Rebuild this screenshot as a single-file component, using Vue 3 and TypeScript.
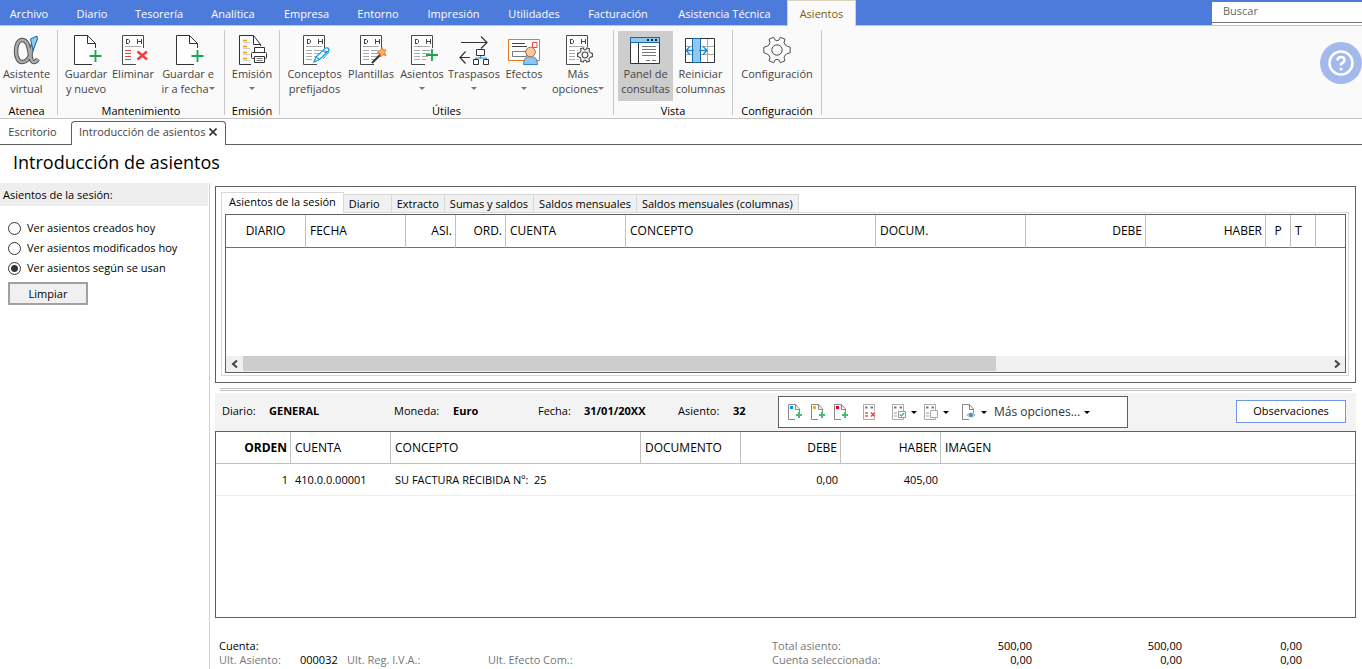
<script setup lang="ts">
import { ref } from 'vue'

interface RibbonItem { icon: string; lines: string[]; arrow?: boolean; active?: boolean }
interface RibbonGroup { name: string; cls: string; items: RibbonItem[] }
interface Column { label: string; cls: string }

const menu: string[] = ['Archivo', 'Diario', 'Tesorería', 'Analítica', 'Empresa', 'Entorno', 'Impresión', 'Utilidades', 'Facturación', 'Asistencia Técnica', 'Asientos']
const activeMenu = ref('Asientos')

const groups: RibbonGroup[] = [
  { name: 'Atenea', cls: 'g-atenea', items: [{ icon: 'alpha', lines: ['Asistente', 'virtual'] }] },
  { name: 'Mantenimiento', cls: 'g-mant', items: [
    { icon: 'page-plus', lines: ['Guardar', 'y nuevo'] },
    { icon: 'ledger-delete', lines: ['Eliminar'] },
    { icon: 'page-plus', lines: ['Guardar e', 'ir a fecha'], arrow: true },
  ] },
  { name: 'Emisión', cls: 'g-emision', items: [{ icon: 'print', lines: ['Emisión', ''], arrow: true }] },
  { name: 'Útiles', cls: 'g-utiles', items: [
    { icon: 'ledger-pen', lines: ['Conceptos', 'prefijados'] },
    { icon: 'ledger-wand', lines: ['Plantillas'] },
    { icon: 'ledger-plus', lines: ['Asientos', ''], arrow: true },
    { icon: 'transfer', lines: ['Traspasos', ''], arrow: true },
    { icon: 'effects', lines: ['Efectos', ''], arrow: true },
    { icon: 'ledger-gear', lines: ['Más', 'opciones'], arrow: true },
  ] },
  { name: 'Vista', cls: 'g-vista', items: [
    { icon: 'panel', lines: ['Panel de', 'consultas'], active: true },
    { icon: 'columns', lines: ['Reiniciar', 'columnas'] },
  ] },
  { name: 'Configuración', cls: 'g-config', items: [{ icon: 'gear', lines: ['Configuración'] }] },
]

const filters = [
  { value: 'creados', label: 'Ver asientos creados hoy' },
  { value: 'modificados', label: 'Ver asientos modificados hoy' },
  { value: 'usan', label: 'Ver asientos según se usan' },
]
const filter = ref('usan')

const queryTabs: string[] = ['Asientos de la sesión', 'Diario', 'Extracto', 'Sumas y saldos', 'Saldos mensuales', 'Saldos mensuales (columnas)']
const queryTab = ref(queryTabs[0])

const queryColumns: Column[] = [
  { label: 'DIARIO', cls: 'w80 center' },
  { label: 'FECHA', cls: 'w100' },
  { label: 'ASI.', cls: 'w50 right' },
  { label: 'ORD.', cls: 'w50 right' },
  { label: 'CUENTA', cls: 'w120' },
  { label: 'CONCEPTO', cls: 'w250' },
  { label: 'DOCUM.', cls: 'w150' },
  { label: 'DEBE', cls: 'w120 right' },
  { label: 'HABER', cls: 'w120 right' },
  { label: 'P', cls: 'w25 center' },
  { label: 'T', cls: 'w25' },
  { label: '', cls: '' },
]
const entryColumns: Column[] = [
  { label: 'ORDEN', cls: 'w75 right strong' },
  { label: 'CUENTA', cls: 'w100' },
  { label: 'CONCEPTO', cls: 'w250' },
  { label: 'DOCUMENTO', cls: 'w100' },
  { label: 'DEBE', cls: 'w100 right' },
  { label: 'HABER', cls: 'w100 right' },
  { label: 'IMAGEN', cls: '' },
]
const rows: string[][] = [['1', '410.0.0.00001', 'SU FACTURA RECIBIDA Nº:\u00a0 25', '', '0,00', '405,00', '']]

const tools = [
  { icon: 'mini-blue', name: 'Nuevo apunte', arrow: false, gap: false },
  { icon: 'mini-amber', name: 'Insertar apunte', arrow: false, gap: false },
  { icon: 'mini-red', name: 'Añadir contrapartida', arrow: false, gap: true },
  { icon: 'mini-delete', name: 'Eliminar apunte', arrow: false, gap: true },
  { icon: 'mini-check', name: 'Validar', arrow: true, gap: false },
  { icon: 'mini-copy', name: 'Copiar', arrow: true, gap: false },
  { icon: 'mini-view', name: 'Ver documento', arrow: true, gap: false },
]
</script>

<template>
  <div class="app">
    <svg class="defs" aria-hidden="true">
      <symbol id="gear-shape" viewBox="-1 -1 34 34">
        <path d="M12.500 2.500 14 5.500Q16 6.500 18 5.500L19.500 2.500 24.500 4.500 23.500 8Q24 11 27 12L30 13V19L26.500 20Q24 21 23.500 24L24.500 27.500 19.500 29.500 18 26.500Q16 25.500 14 26.500L12.500 29.500 7.500 27.500 8.500 24Q8 21 5 20L2 19V13L5.500 12Q8 11 8.500 8L7.500 4.500Z" fill="none" stroke="#444" />
        <circle cx="16" cy="16" r="5.500" fill="none" stroke="#444" />
      </symbol>
      <symbol id="ledger" viewBox="0 0 32 32">
        <path d="M26.500 14V1.500H5.500V30.500H19" fill="#fff" stroke="#4a4a4a" />
        <path d="M9.500 5V10M9.500 5.500H11.500L12.500 6.500V8.500L11.500 9.500H9.500M20.500 5V10M24.500 5V10M20.500 7.500H24.500" fill="none" stroke="#444" />
        <path d="M8 12.500H24" stroke="#aaa" />
      </symbol>
      <symbol id="ledger-rows" viewBox="0 0 32 32">
        <path d="M8 16.500H14M16 16.500H24M8 19.500H14M16 19.500H24M8 22.500H14M16 22.500H22M8 25.500H14M16 25.500H20" stroke="#aaa" />
      </symbol>
      <symbol id="alpha" viewBox="1 0 32 32">
        <path d="M23 10C21 17 19 22 22 27C23.500 29 26 28 28 25M12 6C4 6 4 28 12 28C19 28 20.500 20 22 14M12 6C20 6 18.500 20 22 27" fill="none" stroke="#555" stroke-width="4.500" />
        <path d="M23 10C21 17 19 22 22 27C23.500 29 26 28 28 25M12 6C4 6 4 28 12 28C19 28 20.500 20 22 14M12 6C20 6 18.500 20 22 27" fill="none" stroke="#aaa" stroke-width="2.500" />
        <path d="M20.500 5 27 2 27.500 5 23 16.500Z" fill="#8ecaf0" stroke="#1668a8" />
      </symbol>
      <symbol id="page-plus" viewBox="0 0 32 32">
        <path d="M25.500 14V9.500L17.500 1.500H4.500V30.500H22" fill="#fff" stroke="#333" />
        <path d="M17.500 1.500V9.500H25.500" fill="none" stroke="#333" />
        <path d="M25.500 16V28M19.500 22H31.500" stroke="#17a650" stroke-width="1.800" />
      </symbol>
      <symbol id="ledger-delete" viewBox="0 0 32 32">
        <use href="#ledger" />
        <path d="M8 16.500H14M8 19.500H14M8 22.500H14M8 25.500H14" stroke="#ef4040" />
        <path d="M20.500 17.500 30 25.500M30 17.500 20.500 25.500" stroke="#ef4040" stroke-width="2.500" />
      </symbol>
      <symbol id="print" viewBox="0 0 32 32">
        <path d="M24.500 10.500 17.500 1.500H3.500V30.500H15M17.500 1.500V10.500H24.500V12" fill="none" stroke="#333" />
        <path d="M7 6.500H11M7 12.500H11M7 18.500H11M7 24.500H11" stroke="#f09a18" stroke-width="1.500" />
        <path d="M7 8.500H14M7 14.500H14M7 20.500H14M7 26.500H14" stroke="#ccc" />
        <path d="M18.500 18V13.500H28.500V18" fill="#fff" stroke="#333" />
        <rect x="15.500" y="18.500" width="15" height="6" rx="1" fill="#fff" stroke="#333" />
        <path d="M18.500 22.500H28.500V28.500H18.500Z" fill="#fff" stroke="#333" />
        <path d="M20.500 24.500H26.500M20.500 26.500H26.500" stroke="#777" />
      </symbol>
      <symbol id="ledger-pen" viewBox="1 0 32 32">
        <use href="#ledger" width="32" height="32" /><use href="#ledger-rows" width="32" height="32" />
        <path d="M16 28 18 23 27.500 14Q31 13 31 16.500L21.500 25.500ZM18 23 21.500 25.500M25 16.500 28 19" fill="#fff" stroke="#1b9de2" stroke-width="1.300" />
        <path d="M27 17 31 18 25 25" fill="none" stroke="#1b9de2" />
      </symbol>
      <symbol id="ledger-wand" viewBox="0 0 32 32">
        <use href="#ledger" /><use href="#ledger-rows" />
        <path d="M17 29 26 20" stroke="#333" stroke-width="2" />
        <path d="M27 13.500 28.500 16 31 16 29.500 18.500 31 21.500 28 20.500 25.500 23 25 19.500 22 18.500 25 17Z" fill="#ffb070" stroke="#e8791c" />
      </symbol>
      <symbol id="ledger-plus" viewBox="0 0 32 32">
        <use href="#ledger" /><use href="#ledger-rows" />
        <path d="M26 15V27M20 21H32" stroke="#17a650" stroke-width="1.800" />
      </symbol>
      <symbol id="transfer" viewBox="0 0 32 32">
        <path d="M3 8.500H29M23 2.500 29 8.500 23 14.500M12 23.500H2M7.500 17.500 2 23.500 7.500 29.500" fill="none" stroke="#333" stroke-width="1.200" />
        <path d="M22.500 21V24M17.500 26V24H28.500V26" fill="none" stroke="#1b87d2" />
        <path d="M18.500 15.500H26.500V21.500H18.500ZM15.500 25.500H20.500V30.500H15.500ZM25.500 25.500H30.500V30.500H25.500Z" fill="#fff" stroke="#333" />
      </symbol>
      <symbol id="effects" viewBox="0 0 32 32">
        <path d="M.5 5.500H31.500V26.500H.5Z" fill="#fff" stroke="#e8791c" />
        <path d="M4 9.500H17M4 12.500H19" stroke="#444" />
        <path d="M4.500 17.500H18.500V22.500H4.500Z" fill="#fff" stroke="#777" />
        <path d="M24.500 8.500H29V13.500H24.500Z" fill="#fff" stroke="#ef4040" />
        <path d="M15.500 30.500Q15.500 22.500 22.500 22.500T29.500 30.500Z" fill="#8ec6f0" stroke="#3488c8" />
        <circle cx="22.500" cy="18" r="4.800" fill="#fbc9a0" stroke="#a86c40" />
      </symbol>
      <symbol id="ledger-gear" viewBox="1 0 32 32">
        <use href="#ledger" width="32" height="32" /><use href="#ledger-rows" width="32" height="32" />
        <circle cx="24" cy="20.500" r="8" fill="#fafafa" />
        <svg x="15" y="12" width="18" height="18" viewBox="0 0 32 32"><use href="#gear-shape" stroke-width="2" /></svg>
      </symbol>
      <symbol id="panel" viewBox="1 0 32 32">
        <path d="M1.500 3.500H30.500V29.500H1.500Z" fill="#fff" stroke="#333" />
        <path d="M1.500 3.500H30.500V8.500H1.500Z" fill="#8ecaf0" stroke="#1668a8" />
        <path d="M18 6H20M22 6H24M26 6H28" stroke="#222" stroke-width="2" />
        <path d="M9.500 9V29" stroke="#333" />
        <path d="M13 12.500H27M13 15.500H27M13 18.500H27M13 21.500H27M17 26.500H21M23 26.500H27" stroke="#777" />
      </symbol>
      <symbol id="columns" viewBox="1 0 32 32">
        <path d="M1.500 4.500H30.500V28.500H1.500Z" fill="#fff" stroke="#333" />
        <path d="M2 12.500H30M2 20.500H30M23.500 5V28" stroke="#aaa" />
        <path d="M8.500 4.500H16.500V28.500H8.500Z" fill="#8ecaf0" stroke="#1668a8" />
        <path d="M10 16.500H2M6 12.500 2 16.500 6 20.500M15 16.500H23M19 12.500 23 16.500 19 20.500" fill="none" stroke="#1b87d2" stroke-width="1.300" />
      </symbol>
      <symbol id="gear" viewBox="0 0 32 32">
        <use href="#gear-shape" />
      </symbol>

      <symbol id="mini-page" viewBox="0 0 16 18">
        <path d="M12.500 10V6L8.500 1.500H1.500V16.500H8M8.500 1.500V6.500H12.500" fill="#fff" stroke="#888" />
      </symbol>
      <symbol id="mini-plus" viewBox="0 0 16 18">
        <path d="M12 9V15M9 12H15" stroke="#4cb878" stroke-width="2" />
      </symbol>
      <symbol id="mini-ledger" viewBox="0 0 16 18">
        <path d="M12.500 8V1.500H1.500V16.500H12.500V14" fill="#fff" stroke="#aaa" />
        <path d="M3 4.500H5.500M8.500 4.500H11" stroke="#777" stroke-width="2" />
      </symbol>
      <symbol id="mini-blue" viewBox="0 0 16 18"><use href="#mini-page" /><path d="M3 3H6V6H3Z" fill="#0a94dc" /><use href="#mini-plus" /></symbol>
      <symbol id="mini-amber" viewBox="0 0 16 18"><use href="#mini-page" /><path d="M3 3H6V6H3Z" fill="#f5a623" /><use href="#mini-plus" /></symbol>
      <symbol id="mini-red" viewBox="0 0 16 18"><use href="#mini-page" /><path d="M3 3H6V6H3Z" fill="#e00020" /><use href="#mini-plus" /></symbol>
      <symbol id="mini-delete" viewBox="0 0 16 18">
        <use href="#mini-ledger" />
        <path d="M3 10H6M3 13H6" stroke="#f08080" stroke-width="2" />
        <path d="M9 9.500 13 13.500M13 9.500 9 13.500" stroke="#ee4040" stroke-width="1.600" />
      </symbol>
      <symbol id="mini-check" viewBox="0 0 16 18">
        <use href="#mini-ledger" />
        <path d="M3 10H6M3 13H6" stroke="#ccc" stroke-width="2" />
        <path d="M7.500 8.500H14.500V14.500H7.500Z" fill="#fff" stroke="#999" /><path d="M9 11.500 10.500 13 13 10" fill="none" stroke="#4cb878" stroke-width="1.400" />
      </symbol>
      <symbol id="mini-copy" viewBox="0 0 16 18">
        <use href="#mini-ledger" />
        <path d="M3 10H6M3 13H6" stroke="#ccc" stroke-width="2" />
        <path d="M7.500 7.500H14.500V14.500H7.500Z" fill="#fff" stroke="#aaa" />
      </symbol>
      <symbol id="mini-view" viewBox="0 0 16 18">
        <use href="#mini-page" />
        <path d="M6 12Q10 8 14 12Q10 16 6 12Z" fill="#c8ddf0" stroke="#9ab8d0" /><circle cx="10" cy="12" r="2" fill="#4a8cc4" />
      </symbol>
    </svg>

    <header class="menubar">
      <nav class="menu" aria-label="Menú principal">
        <button v-for="m in menu" :key="m" type="button" :class="{ current: m === activeMenu }" @click="activeMenu = m">{{ m }}</button>
      </nav>
      <input class="search" type="search" placeholder="Buscar" aria-label="Buscar">
    </header>

    <div class="ribbon">
      <section v-for="g in groups" :key="g.name" class="group" :class="g.cls">
        <div class="items">
          <button v-for="(it, i) in g.items" :key="i" type="button" class="item" :class="{ on: it.active }">
            <svg class="icon" aria-hidden="true"><use :href="'#' + it.icon" /></svg>
            <span v-for="(l, n) in it.lines" :key="n" class="line">{{ l }}<i v-if="it.arrow && n === it.lines.length - 1" class="caret"></i></span>
          </button>
        </div>
        <h2>{{ g.name }}</h2>
      </section>
      <button type="button" class="help" aria-label="Ayuda">
        <svg viewBox="0 0 42 42" aria-hidden="true">
          <circle cx="21" cy="21" r="11.500" fill="none" stroke="#fff" stroke-width="2.500" />
          <path d="M17.500 18.500Q17.500 15 21 15T24.500 18Q24.500 20 21 22V23.500" fill="none" stroke="#fff" stroke-width="2.500" />
          <circle cx="21" cy="27" r="1.500" fill="#fff" />
        </svg>
      </button>
    </div>

    <nav class="doctabs" aria-label="Documentos">
      <button type="button" class="doctab">Escritorio</button>
      <div class="doctab open">
        <button type="button">Introducción de asientos</button>
        <button type="button" class="close" aria-label="Cerrar"><svg viewBox="0 0 8 8" aria-hidden="true"><path d="M.5.5 7.500 7.500M7.500.5.5 7.500" stroke="#333" stroke-width="1.600" /></svg></button>
      </div>
      <span class="rest"></span>
    </nav>

    <h1>Introducción de asientos</h1>

    <div class="body">
      <aside class="side">
        <h2>Asientos de la sesión:</h2>
        <div class="filters">
          <label v-for="f in filters" :key="f.value"><input v-model="filter" type="radio" name="filtro" :value="f.value">{{ f.label }}</label>
          <button type="button" class="clear">Limpiar</button>
        </div>
      </aside>

      <main class="main">
        <section class="query">
          <div class="tabs" role="tablist">
            <button v-for="t in queryTabs" :key="t" type="button" role="tab" :aria-selected="t === queryTab" :class="{ sel: t === queryTab }" @click="queryTab = t">{{ t }}</button>
          </div>
          <div class="tabbody">
            <div class="grid upper">
              <table>
                <thead><tr><th v-for="(c, i) in queryColumns" :key="i" :class="c.cls">{{ c.label }}</th></tr></thead>
              </table>
              <div class="scroll">
                <button type="button" aria-label="Desplazar a la izquierda"><svg viewBox="0 0 8 8"><path d="M6 .5 2 4 6 7.500" fill="none" stroke="#444" stroke-width="2" /></svg></button>
                <div class="track"><div class="thumb"></div></div>
                <button type="button" aria-label="Desplazar a la derecha"><svg viewBox="0 0 8 8"><path d="M2 .5 6 4 2 7.500" fill="none" stroke="#444" stroke-width="2" /></svg></button>
              </div>
            </div>
          </div>
        </section>

        <div class="splitter"></div>

        <section class="entry">
          <div class="entryhead">
            <dl>
              <dt>Diario:</dt><dd>GENERAL</dd>
              <dt>Moneda:</dt><dd>Euro</dd>
              <dt>Fecha:</dt><dd>31/01/20XX</dd>
              <dt>Asiento:</dt><dd>32</dd>
            </dl>
            <div class="toolbar">
              <button v-for="t in tools" :key="t.icon" type="button" :aria-label="t.name" :class="{ drop: t.arrow, gap: t.gap }">
                <svg class="mini" aria-hidden="true"><use :href="'#' + t.icon" /></svg><i v-if="t.arrow" class="caret dark"></i>
              </button>
              <button type="button" class="more">Más opciones...<i class="caret dark"></i></button>
            </div>
            <button type="button" class="notes">Observaciones</button>
          </div>
          <div class="grid lower">
            <table>
              <thead><tr><th v-for="c in entryColumns" :key="c.label" :class="c.cls">{{ c.label }}</th></tr></thead>
              <tbody>
                <tr v-for="(r, i) in rows" :key="i"><td v-for="(v, n) in r" :key="n" :class="{ right: n === 0 || n === 4 || n === 5 }">{{ v }}</td></tr>
              </tbody>
            </table>
          </div>
        </section>

        <footer class="totals">
          <span class="black c1">Cuenta:</span>
          <span class="c5">Total asiento:</span>
          <span class="black num">500,00</span><span class="black num">500,00</span><span class="black num">0,00</span>
          <span class="c1">Ult. Asiento:</span><span class="black">000032</span><span>Ult. Reg. I.V.A.:</span><span>Ult. Efecto Com.:</span>
          <span class="c5">Cuenta seleccionada:</span>
          <span class="black num">0,00</span><span class="black num">0,00</span><span class="black num">0,00</span>
        </footer>
      </main>
    </div>
  </div>
</template>

<style>
html, body { margin: 0; }
</style>

<style scoped>
.app { display: flex; flex-direction: column; min-height: 100vh; background: #fff; color: #000; font: 11px/14px "Open Sans", "Noto Sans", sans-serif; overflow: hidden; }
.app * { box-sizing: border-box; }
.defs { display: none; }
button, input { font: inherit; color: inherit; border: 0; margin: 0; padding: 0; background: none; }
h1, h2, dl, dd { margin: 0; font: inherit; }

.menubar { display: flex; justify-content: space-between; height: 26px; background: #4c7bdc; border-bottom: 1px solid #c4c4c4; }
.menu { display: grid; grid-template-columns: 62px 60px 74px 74px 73px 70px 81px 80px 88px 125px 69px; margin-bottom: -1px; color: #fff; }
.menu button { padding: 2px 0 0; text-align: center; white-space: nowrap; }
.menu button:first-child { padding-right: 4px; }
.menu .current { background: #fafafa; color: #7d5c0c; border: 1px solid #d8d4bc; border-bottom: 0; padding: 0; }
.search { width: 150px; height: 21px; margin-top: 2px; padding: 0 11px 3px; background: #fff; border-bottom: 1px solid #777; box-shadow: 0 2px #fff; border-radius: 0; outline: 0; appearance: none; }
.search::placeholder { color: #666; opacity: 1; }

.ribbon { display: flex; position: relative; height: 93px; padding: 4px 0 3px; background: #fafafa; border-bottom: 1px solid #c4c4c4; }
.group { display: flex; flex-direction: column; padding: 1px 4px 0; border-right: 1px solid #c8c8c8; }
.group h2 { text-align: center; margin-top: 3px; }
.items { display: grid; height: 70px; flex: none; }
.g-atenea .items { grid-template-columns: 53px; }
.g-atenea { padding-left: 0; }
.g-mant .items { grid-template-columns: 48px 46px 64px; }
.g-emision .items { grid-template-columns: 46px; }
.g-utiles .items { grid-template-columns: 61px 52px 50px 54px 46px 62px; }
.g-vista .items { grid-template-columns: 55px 55px; }
.g-config .items { grid-template-columns: 80px; }
.item { display: flex; flex-direction: column; align-items: center; justify-content: flex-start; padding-top: 3px; color: #444; line-height: 15px; white-space: nowrap; }
.item.on { background: #cdcdcd; }
.icon { width: 32px; height: 32px; flex: none; }
.line { display: flex; align-items: center; justify-content: center; min-height: 15px; }
.caret { width: 0; height: 0; border: 3px solid transparent; border-top-color: #777; border-bottom-width: 0; margin-left: 4px; }
.line > .caret:only-child { margin-left: 0; }
.caret.dark { border-top-color: #000; }
.help { position: absolute; right: 0; top: 16px; width: 42px; height: 42px; border-radius: 50%; background: #a3b9ec; }
.help svg { display: block; width: 42px; height: 42px; }

.doctabs { display: flex; height: 26px; padding-top: 2px; color: #444; }
.doctab { width: 71px; padding: 0 6px 2px 0; border-bottom: 1px solid #606060; }
.doctab.open { display: flex; align-items: center; gap: 4px; width: 155px; padding: 0 0 3px 7px; border: 1px solid #606060; border-bottom: 0; border-radius: 4px 4px 0 0; white-space: nowrap; }
.close { width: 8px; height: 8px; }
.close svg { display: block; width: 8px; height: 8px; }
.rest { flex: 1; border-bottom: 1px solid #606060; }
h1 { padding: 5px 13px 8px; font-size: 18px; line-height: 25px; }

.body { display: flex; flex: 1; }
.side { width: 210px; border-right: 1px solid #d0d0d0; flex: none; }
.side h2 { width: 208px; height: 23px; padding: 4px 3px 0; background: #eee; line-height: 15px; }
.filters { padding: 12px 8px; }
.filters label { display: flex; align-items: center; gap: 6px; height: 20px; }
.filters input { appearance: none; width: 13px; height: 13px; border: 1px solid #333; border-radius: 50%; background: #fff; }
.filters input:checked { background: radial-gradient(circle, #333 0 3px, #fff 4px); }
.clear { display: block; width: 80px; height: 23px; margin-top: 4px; border: 2px solid #a0a0a0; background: #f0f0f0; }

.main { display: flex; flex-direction: column; flex: 1; min-width: 0; padding: 3px 6px 0 5px; }
.query { border: 1px solid #606060; padding: 5px 6px 6px 5px; }
.tabs { display: flex; align-items: flex-end; height: 20px; }
.tabs button { height: 18px; padding: 0 5px; background: #f0f0f0; border: 1px solid #d8d8d8; border-left: 0; border-bottom: 0; white-space: nowrap; }
.tabs button:nth-child(2) { padding-right: 11px; }
.tabs button.sel { height: 21px; margin-bottom: -1px; padding: 0 7px 3px; background: #fff; border-left: 1px solid #d8d8d8; }
.tabbody { padding: 1px 2px 2px 3px; border: 1px solid #d8d8d8; }
.grid { border: 1px solid #606060; }
.upper { display: flex; flex-direction: column; height: 159px; }
table { width: 100%; table-layout: fixed; border-collapse: separate; border-spacing: 0; font-size: 12px; line-height: 16px; }
th { height: 32px; padding: 0 4px; font-weight: 400; text-align: left; border-right: 1px solid #c0c0c0; border-bottom: 1px solid #c0c0c0; white-space: nowrap; }
th:last-child { border-right: 0; }
.upper th { height: 33px; border-bottom-color: #707070; }
td { height: 32px; padding: 0 4px; font-size: 11px; border-bottom: 1px solid #eee; white-space: nowrap; }
.w25 { width: 25px; }
.w50 { width: 50px; }
.w75 { width: 75px; }
.w80 { width: 80px; }
.w100 { width: 100px; }
.w120 { width: 120px; }
.w150 { width: 150px; }
.w250 { width: 250px; }
.center { text-align: center; }
.right { text-align: right; padding-right: 3px; }
.strong { font-weight: 700; }
.scroll { display: flex; height: 16px; margin-top: auto; background: #f0f0f0; }
.scroll button { display: grid; place-items: center; width: 17px; }
.scroll svg { width: 8px; height: 8px; }
.track { flex: 1; padding-bottom: 1px; }
.thumb { width: 69.4%; height: 100%; background: #cdcdcd; }

.splitter { height: 3px; margin: 5px 4px 2px 5px; border: solid #c0c0c0; border-width: 1px 0; }

.entry { display: flex; flex-direction: column; flex: 1; }
.entryhead { display: flex; align-items: center; height: 38px; padding: 0 10px 0 7px; background: #f3f3f3; }
dl { display: grid; grid-template-columns: 47px 125px 59px 85px 46px 94px 55px 45px; padding-bottom: 2px; }
dd { font-weight: 700; }
.toolbar { display: flex; align-items: center; width: 350px; height: 32px; padding-left: 8px; background: #fff; border: 1px solid #606060; color: #333; }
.toolbar button { display: flex; align-items: center; width: 23px; height: 18px; }
.toolbar button.gap { width: 29px; }
.toolbar button.drop { width: 32px; }
.toolbar button:nth-child(6) { width: 38px; }
.toolbar button.more { width: auto; font-size: 12px; margin-left: 1px; white-space: nowrap; }
.mini { width: 16px; height: 18px; flex: none; }
.notes { width: 110px; height: 23px; margin-left: auto; padding-bottom: 1px; background: #fff; border: 1px solid #6f97e6; }
.entryhead .notes { margin-bottom: 2px; }
.lower { flex: 1; min-height: 187px; }

.totals { display: grid; grid-template-columns: 81px 47px 141px 284px 170px 90px 150px 120px; padding: 21px 0 2px 4px; color: #777; white-space: nowrap; }
.c1 { grid-column: 1; }
.c5 { grid-column: 5; }
.black { color: #000; }
.num { text-align: right; }
</style>
